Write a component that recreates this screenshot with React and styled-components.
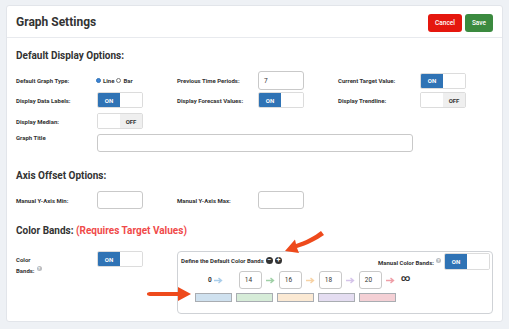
import React from "react";
import styled, { createGlobalStyle } from "styled-components";

const GlobalStyle = createGlobalStyle`
  html, body {
    margin: 0;
    padding: 0;
    background: #eef1f5;
    font-family: Roboto, "Liberation Sans", sans-serif;
    color: #333;
  }
`;

const Page = styled.div`
  position: relative;
  width: 509px;
  height: 329px;
  padding: 5px 6px 0 6px;
  box-sizing: border-box;
`;

const Card = styled.section`
  background: #fff;
  border: 1px solid #e2e5ea;
  border-radius: 3px;
  height: 317px;
  box-sizing: border-box;
`;

const Header = styled.header`
  display: flex;
  align-items: center;
  justify-content: space-between;
  height: 31px;
  padding: 0 9px;
  border-bottom: 1px solid #e8eaee;
`;

const Title = styled.h1`
  margin: 0;
  font-size: 12px;
  font-weight: 700;
  color: #333;
`;

const Actions = styled.div`
  display: flex;
  gap: 3px;
  margin-top: 2px;
`;

const Btn = styled.button`
  height: 18px;
  padding: 0 7px;
  border: none;
  border-radius: 3px;
  background: ${(p) => p.$bg};
  color: #fff;
  font-family: Roboto, "Liberation Sans", sans-serif;
  font-size: 6.5px;
  font-weight: 500;
`;

const Body = styled.div`
  padding: 10px 9px 0 9px;
`;

const Heading = styled.h2`
  margin: ${(p) => p.$top || 0}px 0 ${(p) => p.$bottom || 7}px 0;
  font-size: 10px;
  line-height: 16px;
  font-weight: 700;
  color: #333;
`;

const Warn = styled.span`
  color: #f04a4a;
`;

const FieldRow = styled.div`
  display: grid;
  grid-template-columns: 81px 80px 81px 80px 82px 1fr;
  align-items: ${(p) => (p.$top ? "start" : "center")};
  height: ${(p) => p.$h}px;
  margin-bottom: ${(p) => p.$gap || 0}px;
`;

const Label = styled.label`
  font-size: 6px;
  font-weight: 700;
  color: #333;
  line-height: 11px;
`;

const Input = styled.div`
  width: ${(p) => p.$w || 46}px;
  height: ${(p) => p.$h || 19}px;
  box-sizing: border-box;
  border: 1px solid #c9c9c9;
  border-radius: 3px;
  padding-left: 5px;
  font-size: 6.5px;
  display: flex;
  align-items: center;
  grid-column: ${(p) => p.$span || "auto"};
`;

const ToggleBox = styled.div`
  display: flex;
  width: ${(p) => p.$w || 46}px;
  height: ${(p) => p.$h || 16}px;
  box-sizing: border-box;
  border: 1px solid #dcdcdc;
  border-radius: 2px;
  overflow: hidden;
`;

const Half = styled.div`
  flex: 1;
  display: flex;
  align-items: center;
  justify-content: center;
  font-size: 6px;
  font-weight: 700;
  background: ${(p) => p.$bg || "#fff"};
  color: ${(p) => p.$color || "#333"};
`;

const Toggle = ({ on, w, h }) =>
  on ? (
    <ToggleBox $w={w} $h={h}>
      <Half $bg="#2f73b5" $color="#fff">ON</Half>
      <Half />
    </ToggleBox>
  ) : (
    <ToggleBox $w={w} $h={h}>
      <Half />
      <Half $bg="#efefef">OFF</Half>
    </ToggleBox>
  );

const Radios = styled.div`
  display: flex;
  align-items: center;
  gap: 1px;
  font-size: 6px;
  font-weight: 700;
  margin-left: -1px;
`;

const Dot = styled.span`
  width: 5px;
  height: 5px;
  border-radius: 50%;
  box-sizing: border-box;
  border: 1px solid ${(p) => (p.$on ? "#2f73b5" : "#777")};
  background: ${(p) => (p.$on ? "#3b82d6" : "#fff")};
  margin-right: 1px;
`;

const BandsRow = styled.div`
  display: grid;
  grid-template-columns: 81px 80px 1fr;
  align-items: start;
`;

const BandsLabel = styled(Label)`
  padding-top: 3px;
  width: 30px;
`;

const Help = styled.span`
  display: inline-block;
  width: 5px;
  height: 5px;
  border-radius: 50%;
  background: #b9bcc0;
  color: #fff;
  font-size: 4px;
  line-height: 5px;
  text-align: center;
  vertical-align: 3px;
  margin-left: 2px;
`;

const Panel = styled.div`
  width: 316px;
  height: 63px;
  box-sizing: border-box;
  border: 1px solid #cfd2d6;
  border-radius: 4px;
  padding: 1px 2px 0 3px;
`;

const PanelHead = styled.div`
  display: flex;
  align-items: center;
  justify-content: space-between;
  height: 17px;
`;

const PanelTitle = styled.div`
  display: flex;
  align-items: center;
  gap: 1px;
  font-size: 6px;
  font-weight: 700;
  margin-top: -3px;
`;

const RoundIcon = styled.span`
  display: inline-flex;
  align-items: center;
  justify-content: center;
  width: 7px;
  height: 7px;
  border-radius: 50%;
  background: #333;
  color: #fff;
  font-size: 7px;
  font-weight: 700;
  line-height: 7px;
  margin-left: 1px;
`;

const Manual = styled.div`
  display: flex;
  align-items: center;
  gap: 3px;
  font-size: 6px;
  font-weight: 700;
`;

const Steps = styled.div`
  display: flex;
  align-items: center;
  height: 18px;
  margin-top: 1px;
  padding-left: 27px;
`;

const Zero = styled.span`
  font-size: 6.5px;
  font-weight: 700;
  margin-right: 1px;
`;

const Arrow = styled.span`
  display: inline-flex;
  width: 9px;
  margin: 0 ${(p) => p.$after || 4}px 0 ${(p) => p.$before || 4}px;
`;

const Infinity = styled.span`
  font-size: 9px;
  font-weight: 700;
  margin-left: 2px;
  margin-top: -4px;
`;

const Bars = styled.div`
  display: flex;
  gap: 4px;
  margin-top: 4px;
  padding-left: 14px;
`;

const Bar = styled.div`
  width: 37px;
  height: 9px;
  box-sizing: border-box;
  border: 1px solid #a9adb2;
  background: ${(p) => p.$c};
`;

const Overlay = styled.svg`
  position: absolute;
  pointer-events: none;
`;

const ArrowIcon = ({ color }) => (
  <svg width="9" height="7" viewBox="0 0 9 7">
    <path d="M0 3.5H7M4.5 1L7.5 3.5L4.5 6" stroke={color} strokeWidth="1.4" fill="none" />
  </svg>
);

const bands = [
  { value: "14", arrow: "#9fd0a6" },
  { value: "16", arrow: "#f7d2a4" },
  { value: "18", arrow: "#d5c4ea" },
  { value: "20", arrow: "#ef9ea7" },
];

const barColors = ["#cfe1ef", "#d6ecd8", "#fbe9d3", "#e4ddf1", "#f4d0d5"];

export default function App() {
  return (
    <>
      <GlobalStyle />
      <Page>
        <Card>
          <Header>
            <Title>Graph Settings</Title>
            <Actions>
              <Btn $bg="#e5170e">Cancel</Btn>
              <Btn $bg="#3b8a3f">Save</Btn>
            </Actions>
          </Header>
          <Body>
            <Heading>Default Display Options:</Heading>
            <FieldRow $h={19} $gap={2}>
              <Label>Default Graph Type:</Label>
              <Radios>
                <Dot $on />
                Line
                <Dot style={{ marginLeft: 1 }} />
                Bar
              </Radios>
              <Label>Previous Time Periods:</Label>
              <Input>7</Input>
              <Label>Current Target Value:</Label>
              <Toggle on />
            </FieldRow>
            <FieldRow $h={16} $gap={5}>
              <Label>Display Data Labels:</Label>
              <Toggle on />
              <Label>Display Forecast Values:</Label>
              <Toggle on />
              <Label>Display Trendline:</Label>
              <Toggle />
            </FieldRow>
            <FieldRow $h={16} $gap={5}>
              <Label>Display Median:</Label>
              <Toggle />
            </FieldRow>
            <FieldRow $h={18} $top>
              <Label style={{ lineHeight: "8px" }}>Graph Title</Label>
              <Input $w={316} $h={18} $span="2 / 6" />
            </FieldRow>

            <Heading $top={16}>Axis Offset Options:</Heading>
            <FieldRow $h={18}>
              <Label>Manual Y-Axis Min:</Label>
              <Input $h={18} />
              <Label>Manual Y-Axis Max:</Label>
              <Input $h={18} />
            </FieldRow>

            <Heading $top={14} $bottom={12}>
              Color Bands: <Warn>(Requires Target Values)</Warn>
            </Heading>
            <BandsRow>
              <BandsLabel>
                Color Bands:<Help>?</Help>
              </BandsLabel>
              <Toggle on />
              <Panel>
                <PanelHead>
                  <PanelTitle>
                    Define the Default Color Bands
                    <RoundIcon>−</RoundIcon>
                    <RoundIcon>+</RoundIcon>
                  </PanelTitle>
                  <Manual>
                    <span>
                      Manual Color Bands:<Help>?</Help>
                    </span>
                    <Toggle on h={17} />
                  </Manual>
                </PanelHead>
                <Steps>
                  <Zero>0</Zero>
                  <Arrow $before={1} $after={16}>
                    <ArrowIcon color="#a9cdea" />
                  </Arrow>
                  {bands.map((b) => (
                    <React.Fragment key={b.value}>
                      <Input $w={23} $h={18}>
                        {b.value}
                      </Input>
                      <Arrow>
                        <ArrowIcon color={b.arrow} />
                      </Arrow>
                    </React.Fragment>
                  ))}
                  <Infinity>∞</Infinity>
                </Steps>
                <Bars>
                  {barColors.map((c) => (
                    <Bar key={c} $c={c} />
                  ))}
                </Bars>
              </Panel>
            </BandsRow>
          </Body>
        </Card>
        <Overlay width="50" height="30" viewBox="0 0 50 30" style={{ left: 282, top: 227 }}>
          <path d="M39 4 C33 9 23 14 14 17 L13 12.5 L3 24 L17 26 L15 21 C25 18 35 13 42 8 Z" fill="#ee4a1c" />
        </Overlay>
        <Overlay width="50" height="16" viewBox="0 0 50 16" style={{ left: 145, top: 286 }}>
          <path d="M2 8 C2 6 5 6 8 6 L33 6 L33 1 L46 8 L33 15 L33 10 L8 10 C5 10 2 10 2 8 Z" fill="#ee4a1c" />
        </Overlay>
      </Page>
    </>
  );
}
